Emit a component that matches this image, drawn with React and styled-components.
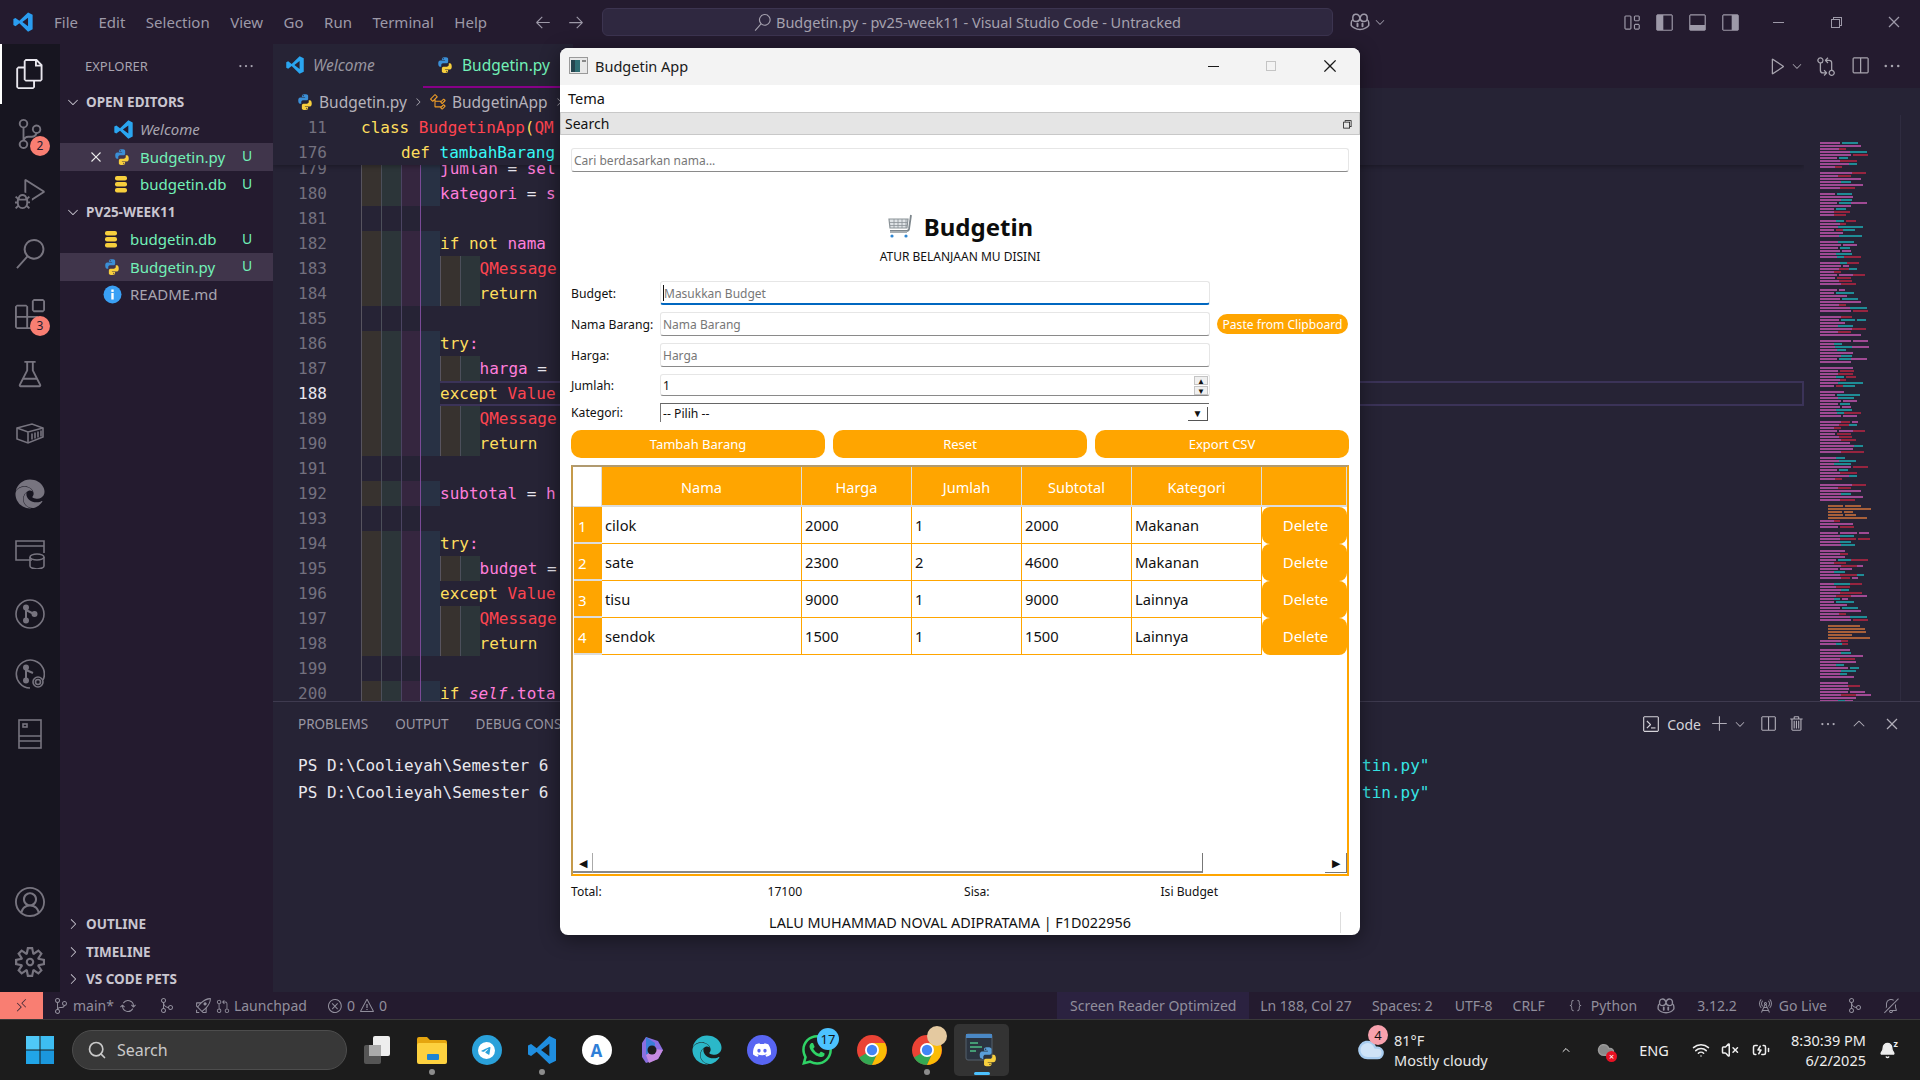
import styled, { createGlobalStyle } from "styled-components";
import {
  VscFiles, VscSourceControl, VscDebugAlt, VscSearch, VscExtensions, VscBeaker, VscAccount,
  VscSettingsGear, VscChevronDown, VscChevronRight, VscEllipsis, VscClose, VscPlay,
  VscChromeMinimize, VscChromeRestore, VscChromeClose, VscChromeMaximize, VscArrowLeft, VscArrowRight,
  VscLayout, VscLayoutSidebarLeft, VscLayoutPanel, VscLayoutSidebarRight, VscSplitHorizontal,
  VscGitCompare, VscAdd, VscTrash, VscTerminal, VscChevronUp, VscRadioTower, VscBellSlash,
  VscError, VscWarning, VscSync, VscGitMerge, VscGitPullRequest, VscRocket, VscSymbolClass,
  VscJson, VscRemote,
} from "react-icons/vsc";
import { SiTelegram, SiDiscord, SiWhatsapp } from "react-icons/si";
import { FaEdge } from "react-icons/fa";
import { Search, Wifi, VolumeX, BatteryCharging, ChevronUp, Bell, Cloud } from "lucide-react";

const UI = `"Noto Sans", "Open Sans", sans-serif`;
const MONO = `"DejaVu Sans Mono", "Liberation Mono", monospace`;
const ORANGE = "#ffa500";

const Global = createGlobalStyle`
  html, body { margin: 0; padding: 0; background: #241b2f; }
  * { box-sizing: border-box; }
`;

const Screen = styled.div`
  position: relative;
  width: 1920px;
  height: 1080px;
  overflow: hidden;
  display: flex;
  flex-direction: column;
  font-family: ${UI};
  background: #241b2f;
`;

/* ---------- vs code title bar ---------- */
const TitleBar = styled.div`
  height: 44px;
  display: flex;
  align-items: center;
  padding-left: 12px;
  background: #241b2f;
  color: #9d99a8;
  font-size: 15px;
`;
const Menu = styled.div`
  display: flex;
  gap: 20.5px;
  margin-left: 20px;
  width: 476px;
`;
const Nav = styled.div`
  display: flex;
  gap: 15px;
  width: 68px;
  font-size: 18px;
  margin-left: 4px;
`;
const CommandCenter = styled.div`
  width: 731px;
  height: 28px;
  background: #2f2840;
  border: 1px solid #3c3450;
  border-radius: 6px;
  display: flex;
  align-items: center;
  justify-content: center;
  gap: 5px;
  font-size: 14.5px;
  color: #a5a1ae;
`;
const TitleTools = styled.div`
  display: flex;
  align-items: center;
  gap: 3px;
  margin-left: 17px;
  font-size: 20px;
`;
const LayoutIcons = styled.div`
  display: flex;
  gap: 14px;
  margin-left: 235px;
  font-size: 19px;
`;
const WinControls = styled.div`
  display: flex;
  gap: 42px;
  margin-left: 30px;
  font-size: 16px;
`;

/* ---------- main area ---------- */
const Main = styled.div`
  flex: 1;
  display: flex;
  min-height: 0;
`;
const ActivityBar = styled.div`
  width: 60px;
  flex: none;
  background: #171520;
  display: flex;
  flex-direction: column;
`;
const ActivityItem = styled.div`
  position: relative;
  height: 60px;
  flex: none;
  display: flex;
  align-items: center;
  justify-content: center;
  color: #77747f;
  font-size: 30px;
  border-left: 2px solid ${(p) => (p.$active ? "#fff" : "transparent")};
  padding-right: 2px;
  ${(p) => p.$active && "color:#e9e7ee;"}
  ${(p) => p.$push && "margin-top:auto;"}
`;
const Badge = styled.span`
  position: absolute;
  left: 28px;
  top: 32px;
  width: 20px;
  height: 20px;
  border-radius: 50%;
  background: #f97e72;
  color: #241b2f;
  font-size: 12px;
  line-height: 20px;
  text-align: center;
`;
const Sidebar = styled.div`
  width: 213px;
  flex: none;
  background: #241b2f;
  display: flex;
  flex-direction: column;
`;
const SideHeader = styled.div`
  height: 44px;
  flex: none;
  display: flex;
  align-items: center;
  justify-content: space-between;
  padding: 0 18px 0 25px;
  color: #a8a4b0;
  font-size: 13px;
`;
const SectionRow = styled.div`
  height: 27.5px;
  flex: none;
  display: flex;
  align-items: center;
  gap: 5px;
  padding-left: 5px;
  color: #c9c6d0;
  font-size: 13.5px;
  font-weight: 700;
  ${(p) => p.$low && "padding-top:2px;"}
  ${(p) => p.$push && "margin-top:auto;"}
`;
const FileRow = styled.div`
  height: 27.5px;
  flex: none;
  display: flex;
  align-items: center;
  padding-left: ${(p) => p.$indent}px;
  background: ${(p) => (p.$selected ? "#40354b" : "transparent")};
  color: ${(p) => p.$color || "#72f1b8"};
  font-size: 15px;
  font-style: ${(p) => (p.$italic ? "italic" : "normal")};
  white-space: nowrap;
  position: relative;
`;
const FileIcon = styled.span`
  width: 27px;
  flex: none;
  display: flex;
  align-items: center;
`;
const CloseMark = styled.span`
  width: 26px;
  flex: none;
  color: #eee;
  font-size: 18px;
  display: flex;
  align-items: center;
`;
const GitMark = styled.span`
  position: absolute;
  left: 182px;
  top: 3px;
  font-size: 14px;
  color: #72f1b8;
`;
const Content = styled.div`
  flex: 1;
  min-width: 0;
  display: flex;
  flex-direction: column;
  background: #262335;
`;
const Tabs = styled.div`
  height: 44px;
  flex: none;
  display: flex;
  align-items: stretch;
  background: #241b2f;
`;
const Tab = styled.div`
  width: 150px;
  display: flex;
  align-items: center;
  gap: 8px;
  padding-left: ${(p) => (p.$active ? 13 : 12)}px;
  background: #262335;
  color: ${(p) => (p.$active ? "#72f1b8" : "#98959f")};
  font-size: 15.5px;
  font-style: ${(p) => (p.$active ? "normal" : "italic")};
  border-bottom: 2px solid ${(p) => (p.$active ? "#880088" : "transparent")};
  white-space: nowrap;
`;
const EditorActions = styled.div`
  margin-left: auto;
  display: flex;
  align-items: center;
  padding-right: 18px;
  color: #a7a4ae;
  font-size: 20px;
`;
const ToolSlot = styled.span`
  margin-left: ${(p) => p.$ml || 0}px;
  display: flex;
  align-items: center;
`;
const Crumbs = styled.div`
  height: 27px;
  flex: none;
  display: flex;
  align-items: center;
  gap: 5px;
  padding-left: 23px;
  color: #b5b2bb;
  font-size: 15.5px;
`;
const EditorBody = styled.div`
  flex: 1;
  min-height: 0;
  display: flex;
`;
const CodeColumn = styled.div`
  width: 1531px;
  flex: none;
  overflow: hidden;
  display: flex;
  flex-direction: column;
`;
const Sticky = styled.div`
  flex: none;
  background: #262335;
  box-shadow: 0 2px 4px rgba(0, 0, 0, 0.25);
  position: relative;
  z-index: 1;
`;
const Lines = styled.div`
  flex: 1;
  min-height: 0;
  overflow: hidden;
`;
const CodeRow = styled.div`
  height: 25px;
  display: flex;
  font-family: ${MONO};
  font-size: 16px;
  line-height: 25px;
  white-space: pre;
  ${(p) => p.$first && "margin-top:-9.5px;"}
`;
const LineNo = styled.span`
  width: 54px;
  flex: none;
  text-align: right;
  color: ${(p) => (p.$current ? "#e8e6ee" : "#74717f")};
`;
const LineBody = styled.div`
  flex: 1;
  margin-left: 34px;
  display: flex;
  padding-left: ${(p) => p.$indent || 0}px;
  ${(p) => p.$current && "box-shadow: inset 0 0 0 2px #3b3358;"}
`;
const Band = styled.span`
  width: 19.75px;
  flex: none;
  background: ${(p) => (p.$on ? p.$color : "transparent")};
  border-left: 1px solid ${(p) => p.$guide};
`;
const Tok = styled.span`
  color: ${(p) => p.$c};
  font-style: ${(p) => (p.$i ? "italic" : "normal")};
`;
const Minimap = styled.svg`
  width: 96px;
  height: 613px;
  flex: none;
  display: block;
`;
const ScrollGutter = styled.div`
  flex: 1;
  border-left: 1px solid #2f2c40;
`;
const Panel = styled.div`
  height: 291px;
  flex: none;
  border-top: 1px solid #3e3a4f;
  position: relative;
  z-index: 2;
  background: #262335;
`;
const PanelHead = styled.div`
  height: 44px;
  display: flex;
  align-items: center;
  padding-left: 25px;
  margin-bottom: 6px;
  color: #9a97a3;
  font-size: 13.5px;
`;
const PanelTab = styled.span`
  margin-right: 27px;
  white-space: nowrap;
`;
const PanelTools = styled.div`
  margin-left: auto;
  display: flex;
  align-items: center;
  padding-right: 20px;
  color: #b0adb8;
  font-size: 18px;
`;
const CodeLabel = styled.span`
  display: flex;
  align-items: center;
  gap: 7px;
  font-size: 14px;
  color: #d5d3da;
`;
const TermRow = styled.div`
  display: grid;
  grid-template-columns: 1064px auto;
  height: 27px;
  padding-left: 25px;
  font-family: ${MONO};
  font-size: 16px;
  line-height: 27px;
  white-space: pre;
  color: #e9e8ee;
`;
const TermLink = styled.span`
  color: #36e6e6;
`;

/* ---------- status bar ---------- */
const StatusBar = styled.div`
  height: 28px;
  flex: none;
  display: flex;
  align-items: center;
  background: #241b2f;
  color: #918e9c;
  font-size: 14px;
  border-bottom: 1px solid #3a3a3a;
  position: relative;
  z-index: 2;
`;
const Remote = styled.div`
  width: 43px;
  height: 100%;
  background: #f97e72;
  color: #402a38;
  display: flex;
  align-items: center;
  justify-content: center;
  font-size: 15px;
`;
const StatusItem = styled.span`
  margin-left: ${(p) => p.$ml || 0}px;
  display: flex;
  align-items: center;
  gap: ${(p) => p.$gap || 4}px;
  white-space: nowrap;
  font-size: 14px;
`;
const StatusRight = styled.div`
  margin-left: auto;
  height: 100%;
  display: flex;
  align-items: center;
  padding-right: 21px;
`;
const ReaderMode = styled.span`
  height: 100%;
  width: 192px;
  display: flex;
  align-items: center;
  justify-content: center;
  background: #2b2240;
  white-space: nowrap;
`;

/* ---------- windows task bar ---------- */
const Taskbar = styled.div`
  height: 60px;
  flex: none;
  display: flex;
  align-items: center;
  background: #1c1c1c;
  color: #eee;
`;
const StartButton = styled.div`
  width: 72px;
  flex: none;
  display: flex;
  justify-content: center;
  padding-left: 12px;
  padding-right: 4px;
`;
const SearchPill = styled.div`
  width: 275px;
  height: 40px;
  flex: none;
  border-radius: 20px;
  background: #383838;
  border: 1px solid #4d4d4d;
  display: flex;
  align-items: center;
  gap: 10px;
  padding-left: 14px;
  color: #c9c9c9;
  font-size: 16px;
`;
const Apps = styled.div`
  display: flex;
  margin-left: 2px;
`;
const AppSlot = styled.div`
  position: relative;
  width: 55px;
  height: 52px;
  display: flex;
  align-items: center;
  justify-content: center;
  border-radius: 5px;
  ${(p) => p.$active && "background:#333;"}
`;
const RunDot = styled.span`
  position: absolute;
  bottom: 1px;
  left: 50%;
  transform: translateX(-50%);
  width: ${(p) => (p.$active ? 16 : 6)}px;
  height: ${(p) => (p.$active ? 3 : 6)}px;
  border-radius: 3px;
  background: ${(p) => (p.$active ? "#4cc2ff" : "#8c8c8c")};
`;
const CountBadge = styled.span`
  position: absolute;
  top: 4px;
  left: 28px;
  width: 22px;
  height: 22px;
  border-radius: 50%;
  background: #4cc2ff;
  color: #111;
  font-size: 13px;
  line-height: 22px;
  text-align: center;
`;
const Tray = styled.div`
  margin-left: auto;
  padding-right: 23px;
  display: flex;
  align-items: center;
`;
const TrayIcon = styled.span`
  position: relative;
  margin-left: ${(p) => p.$ml || 0}px;
  width: ${(p) => p.$w}px;
  flex: none;
  display: flex;
  justify-content: center;
  align-items: center;
  font-size: 14.5px;
`;
const Weather = styled.div`
  margin-left: 8px;
  width: 166px;
  font-size: 14.5px;
  line-height: 20px;
  color: #e6e6e6;
`;
const Clock = styled.div`
  width: 96px;
  flex: none;
  text-align: right;
  font-size: 14.5px;
  line-height: 20px;
`;
const WeatherBadge = styled.span`
  position: absolute;
  top: -11px;
  left: 12px;
  width: 20px;
  height: 20px;
  border-radius: 50%;
  background: #f7a1ad;
  color: #111;
  font-size: 13px;
  line-height: 20px;
  text-align: center;
`;
const ErrorDot = styled.span`
  position: absolute;
  right: -1px;
  bottom: -3px;
  width: 11px;
  height: 11px;
  border-radius: 50%;
  background: #e81123;
  color: #fff;
  font-size: 9px;
  line-height: 11px;
  text-align: center;
`;
const SleepMark = styled.span`
  position: absolute;
  top: -5px;
  right: -1px;
  font-size: 9px;
  font-weight: 700;
`;

/* ---------- floating budgetin window ---------- */
const AppWindow = styled.div`
  position: absolute;
  left: 560px;
  top: 48px;
  width: 800px;
  height: 887px;
  z-index: 5;
  background: #fff;
  border-radius: 8px;
  overflow: hidden;
  display: flex;
  flex-direction: column;
  box-shadow: 0 4px 20px rgba(0, 0, 0, 0.45);
  color: #111;
`;
const WinTitle = styled.div`
  height: 37px;
  flex: none;
  background: #f3f3f3;
  display: flex;
  align-items: center;
  padding: 0 0 2px 9px;
  gap: 7px;
  font-size: 14.5px;
  color: #1a1a1a;
`;
const WinButtons = styled.div`
  margin-left: auto;
  display: flex;
  align-items: center;
  gap: 42px;
  padding-right: 21px;
  font-size: 16px;
`;
const MenuBar = styled.div`
  height: 27px;
  flex: none;
  padding-left: 8px;
  font-size: 14.5px;
  line-height: 27px;
`;
const DockTitle = styled.div`
  height: 23px;
  flex: none;
  background: #e5e5e5;
  border: 1px solid #c8c8c8;
  display: flex;
  align-items: center;
  justify-content: space-between;
  padding: 0 6px 0 4px;
  font-size: 14px;
`;
const Body = styled.div`
  flex: 1;
  display: flex;
  flex-direction: column;
  padding: 13px 11px 0 11px;
  min-height: 0;
`;
const TextBox = styled.div`
  height: ${(p) => p.$h || 24}px;
  background: #fff;
  border: 1px solid #e6e6e6;
  border-bottom: ${(p) => (p.$focus ? "2px solid #0067c0" : "1px solid #8a8a8a")};
  border-radius: 3px;
  display: flex;
  align-items: center;
  padding-left: 2px;
  ${(p) => p.$focus && "padding-top:1px;"}
  font-size: 12px;
  color: ${(p) => (p.$value ? "#111" : "#777")};
  position: relative;
`;
const Caret = styled.span`
  width: 1px;
  height: 16px;
  background: #111;
`;
const Brand = styled.div`
  margin-top: 40px;
  height: 28px;
  display: flex;
  align-items: center;
  justify-content: center;
  gap: 11px;
  font-size: 24px;
  font-weight: 700;
  color: #0c0c0c;
`;
const Tagline = styled.div`
  margin-top: 8px;
  height: 18px;
  text-align: center;
  font-size: 12px;
  line-height: 18px;
`;
const Form = styled.div`
  margin-top: 15px;
  display: grid;
  grid-template-columns: 89px 550px 138px;
  row-gap: 7px;
  align-items: center;
  font-size: 12.2px;
`;
const PasteButton = styled.div`
  justify-self: end;
  width: 131px;
  height: 20px;
  border-radius: 10px;
  background: ${ORANGE};
  color: #fff;
  font-size: 12.1px;
  line-height: 21px;
  text-align: center;
  white-space: nowrap;
`;
const SpinButtons = styled.div`
  position: absolute;
  right: 1px;
  top: 1px;
  width: 14px;
  display: flex;
  flex-direction: column;
  gap: 1px;
`;
const SpinPart = styled.div`
  height: 9px;
  background: #f0f0f0;
  border: 1px solid #c4c4c4;
  display: flex;
  align-items: center;
  justify-content: center;
  font-size: 8px;
  line-height: 1;
  color: #111;
`;
const SelectBox = styled.div`
  height: 19px;
  width: 549px;
  border-top: 1px solid #666;
  border-left: 1px solid #777;
  display: flex;
  align-items: center;
  justify-content: space-between;
  padding: 1px 1px 0 2px;
  font-size: 12.2px;
`;
const SelectArrow = styled.div`
  width: 20px;
  height: 14px;
  border-right: 1px solid #555;
  border-bottom: 1px solid #555;
  display: flex;
  align-items: center;
  justify-content: center;
  font-size: 10px;
`;
const Actions = styled.div`
  margin-top: 8px;
  display: grid;
  grid-template-columns: 254px 254px 254px;
  justify-content: space-between;
`;
const ActionButton = styled.div`
  height: 28px;
  border-radius: 10px;
  background: ${ORANGE};
  color: #fff;
  font-size: 13px;
  line-height: 28px;
  text-align: center;
`;
const TableFrame = styled.div`
  margin-top: 7px;
  height: 411px;
  flex: none;
  border: 2px solid ${ORANGE};
  border-top-color: #b09a70;
  border-left-color: #c59a4a;
  display: flex;
  flex-direction: column;
`;
const Grid = styled.div`
  display: grid;
  grid-template-columns: 29px 200px 110px 110px 110px 130px 85px;
`;
const CornerCell = styled.div`
  height: 40px;
  background: #fff;
  border-right: 1px solid #ddd;
  border-bottom: 1px solid #ddd;
`;
const HeadCell = styled.div`
  height: 40px;
  background: ${ORANGE};
  color: #fff;
  font-size: 14.5px;
  line-height: 41px;
  text-align: center;
  border-right: 1px solid #dcdcdc;
  border-bottom: 2px solid #dcdcdc;
`;
const RowHead = styled.div`
  height: 37px;
  background: ${ORANGE};
  color: #fff;
  font-size: 15px;
  line-height: 38px;
  padding-left: 4px;
  margin-left: 1px;
  border-bottom: 2px solid #dcdcdc;
`;
const Cell = styled.div`
  height: 37px;
  border-right: 1px solid ${ORANGE};
  border-bottom: 1px solid ${ORANGE};
  font-size: 14.7px;
  line-height: 36px;
  padding-left: 3px;
`;
const DeleteCell = styled.div`
  height: 37px;
  background: ${ORANGE};
  border-radius: 8px;
  color: #fff;
  font-size: 15px;
  line-height: 36px;
  text-align: center;
  padding-left: 2px;
`;
const Scrollbar = styled.div`
  margin-top: auto;
  margin-bottom: 1px;
  height: 20px;
  flex: none;
  display: flex;
  background: #fff;
`;
const ScrollArrow = styled.div`
  width: 20px;
  flex: none;
  display: flex;
  align-items: center;
  justify-content: center;
  font-size: 11px;
  color: #111;
  ${(p) => p.$end && "margin-left:auto;width:22px;border-right:1px solid #777;border-bottom:1px solid #777;"}
  ${(p) => !p.$end && "border-right:1px solid #aaa;border-bottom:2px solid #888;"}
`;
const ScrollThumb = styled.div`
  width: 610px;
  flex: none;
  border-right: 1px solid #777;
  border-bottom: 2px solid #888;
`;
const Totals = styled.div`
  margin-top: 6px;
  height: 20px;
  flex: none;
  display: grid;
  grid-template-columns: repeat(4, 196.5px);
  font-size: 12.1px;
  line-height: 20px;
`;
const Author = styled.div`
  margin-top: 10px;
  height: 22px;
  flex: none;
  position: relative;
  font-size: 14.4px;
  line-height: 22px;
  text-align: center;
  padding-right: 20px;
  white-space: nowrap;
`;
const SizeGrip = styled.span`
  position: absolute;
  right: 8px;
  top: 0;
  width: 1px;
  height: 21px;
  background: #ddd;
`;

/* ---------- drawings ---------- */
const PY = "M11.900 1.500C7.600 1.500 7.900 3.400 7.900 3.400v2h4.200V6H5.900S3 5.700 3 10.100s2.500 4.300 2.500 4.300H7v-2.100s-.1-2.500 2.500-2.500h4.300s2.400 0 2.400-2.300V3.800s.4-2.300-4.300-2.300zM9.600 2.800a.8.8 0 1 1 0 1.600.8.8 0 0 1 0-1.600z";
const Python = ({ s = 18 }) => (
  <svg width={s} height={s} viewBox="0 0 24 24">
    <path fill="#3b8fd6" d={PY} />
    <path fill="#f7cf3d" transform="rotate(180 12 12)" d={PY} />
  </svg>
);
const PythonWindow = () => (
  <svg width="34" height="36" viewBox="0 0 34 36">
    <rect x="1" y="2" width="26" height="26" rx="2" fill="#2b3440" stroke="#55606c" />
    <rect x="1" y="2" width="26" height="4" fill="#4a88c5" />
    <path d="M5 11h8M5 15h12M5 19h6" stroke="#4fbf86" strokeWidth="1.500" />
    <g transform="translate(12 14) scale(.9)">
      <path fill="#5a9fd8" d={PY} />
      <path fill="#f7cf3d" transform="rotate(180 12 12)" d={PY} />
    </g>
  </svg>
);
const CodeLogo = ({ s = 20, c = "#2aa5f0" }) => (
  <svg width={s} height={s} viewBox="0 0 24 24">
    <path fill={c} fillRule="evenodd" d="M17.500 1.500 22.500 4v16l-5 2.500L8 13.300l-4.200 3.200-2.300-1.200v-6.600l2.300-1.200L8 10.700zM17.500 7.300 11.300 12l6.200 4.700z" />
  </svg>
);
const CopilotFace = ({ s = 20 }) => (
  <svg width={s} height={s} viewBox="0 0 24 24" fill="none" stroke="currentColor" strokeWidth="1.800">
    <path d="M12 7.500C11 3 8.500 2.500 6.500 2.800 4 3.200 3 5.500 3.500 9c.1 1 1.500 2.500 4 2.500S11.500 10 12 7.500zM12 7.500C13 3 15.500 2.500 17.500 2.800 20 3.200 21 5.500 20.500 9c-.1 1-1.500 2.500-4 2.500S12.500 10 12 7.500z" />
    <path d="M3.500 9C2 10 1.500 11.500 1.500 13v3c1 1.500 5 5 10.500 5s9.500-3.500 10.500-5v-3c0-1.500-.5-3-2-4" />
    <path d="M9 14v3M15 14v3" strokeWidth="2.400" strokeLinecap="round" />
  </svg>
);
const DbIcon = () => (
  <svg width="16" height="18" viewBox="0 0 16 18">
    <rect x="2" y="1" width="12" height="4.500" rx="2" fill="#f7cf3d" />
    <rect x="2" y="7" width="12" height="4.500" rx="2" fill="#f7cf3d" />
    <rect x="2" y="13" width="12" height="4.500" rx="2" fill="#f7cf3d" />
  </svg>
);
const InfoIcon = () => (
  <svg width="19" height="19" viewBox="0 0 19 19">
    <circle cx="9.500" cy="9.500" r="9" fill="#3aa0f5" />
    <rect x="8.300" y="8" width="2.400" height="6.500" fill="#fff" />
    <rect x="8.300" y="4.500" width="2.400" height="2.400" fill="#fff" />
  </svg>
);
const ContainerIcon = () => (
  <svg width="30" height="30" viewBox="0 0 30 30" fill="none" stroke="currentColor" strokeWidth="1.600">
    <path d="M2 9l15-4 11 4v9l-15 6-11-4z" />
    <path d="M2 9l11 4 15-4M13 13v11M17 14.500v6M20 13.500v6M23 12.500v6M26 11.500v6" />
  </svg>
);
const DbWindowIcon = () => (
  <svg width="30" height="30" viewBox="0 0 30 30" fill="none" stroke="currentColor" strokeWidth="1.600">
    <path d="M17 21H1V2h28v12M1 7h28" />
    <ellipse cx="22" cy="18" rx="7" ry="3" />
    <path d="M15 18v9c0 1.600 3 3 7 3s7-1.400 7-3v-9" />
  </svg>
);
const BranchCircleIcon = () => (
  <svg width="30" height="30" viewBox="0 0 30 30" fill="none" stroke="currentColor" strokeWidth="1.600">
    <circle cx="15" cy="15" r="14" />
    <path d="M11 9v12M11 11l8 4" strokeWidth="2" />
    <circle cx="11" cy="8.500" r="2.200" fill="currentColor" />
    <circle cx="11" cy="21.500" r="2.200" fill="currentColor" />
    <circle cx="19.500" cy="15" r="2.200" fill="currentColor" />
  </svg>
);
const BranchSearchIcon = () => (
  <svg width="30" height="30" viewBox="0 0 30 30" fill="none" stroke="currentColor" strokeWidth="1.600">
    <path d="M28 21A14 14 0 1 0 15 29" />
    <path d="M11 9v12M11 11l7 3" strokeWidth="2" />
    <circle cx="11" cy="8.500" r="2.200" fill="currentColor" />
    <circle cx="11" cy="21.500" r="2.200" fill="currentColor" />
    <circle cx="23" cy="23" r="5" fill="#171520" />
    <circle cx="23" cy="23" r="2.500" />
  </svg>
);
const CabinetIcon = () => (
  <svg width="26" height="30" viewBox="0 0 26 30" fill="none" stroke="currentColor" strokeWidth="1.600">
    <rect x="2" y="1" width="22" height="28" />
    <path d="M2 17h22M2 22h22" />
    <rect x="6" y="5" width="4" height="3" />
  </svg>
);
const Cart = () => (
  <svg width="26" height="24" viewBox="0 0 26 24" fill="none">
    <path d="M2 5h19l-1 9H3z" fill="#dfe3e6" stroke="#8b9398" strokeWidth="1.200" />
    <path d="M2 8.500h19M3 11.500h17M7 5v9M11 5v9M15 5v9M19 5v9" stroke="#8b9398" strokeWidth=".8" />
    <path d="M24 1l-2 14c-.2 1-1 2-2.500 2H3" stroke="#7d868c" strokeWidth="1.800" />
    <path d="M3 18h17" stroke="#a8aeb2" strokeWidth="2" />
    <circle cx="5" cy="22" r="1.600" fill="#2f86d1" />
    <circle cx="19" cy="22" r="1.600" fill="#2f86d1" />
  </svg>
);
const AppGlyph = () => (
  <svg width="19" height="17" viewBox="0 0 19 17">
    <rect x=".5" y=".5" width="18" height="16" fill="#e8e8e8" stroke="#9a9a9a" />
    <rect x="2" y="3" width="9" height="12" fill="#2f6d73" />
    <rect x="2" y="3" width="4" height="12" fill="#25454f" />
    <rect x="13" y="3" width="4" height="2" fill="#888" />
  </svg>
);
const WinLogo = () => (
  <svg width="30" height="30" viewBox="0 0 30 30">
    <rect x="1" y="1" width="13.500" height="13.500" fill="#4fc8f7" />
    <rect x="15.500" y="1" width="13.500" height="13.500" fill="#3dbdf2" />
    <rect x="1" y="15.500" width="13.500" height="13.500" fill="#21a5e8" />
    <rect x="15.500" y="15.500" width="13.500" height="13.500" fill="#1b97dd" />
  </svg>
);
const TaskView = () => (
  <svg width="32" height="30" viewBox="0 0 32 30">
    <rect x="3" y="10" width="17" height="19" rx="2" fill="#555" />
    <rect x="12" y="1" width="17" height="20" rx="2" fill="#eee" />
    <rect x="8" y="10" width="12" height="11" fill="#aaa" />
  </svg>
);
const Folder = () => (
  <svg width="32" height="30" viewBox="0 0 32 30">
    <path d="M1 4a2 2 0 0 1 2-2h8l3 3h15a2 2 0 0 1 2 2v3H1z" fill="#e5a50f" />
    <rect x="1" y="8" width="30" height="21" rx="2" fill="#fdd13f" />
    <rect x="11" y="19" width="12" height="6" rx="1" fill="#1d83d4" />
  </svg>
);
const RoundApp = styled.span`
  width: 30px;
  height: 30px;
  border-radius: 50%;
  background: ${(p) => p.$bg};
  color: ${(p) => p.$fg || "#fff"};
  display: flex;
  align-items: center;
  justify-content: center;
  font-size: ${(p) => p.$size || 17}px;
  font-weight: 700;
`;
const Copilot = () => (
  <svg width="30" height="30" viewBox="0 0 30 30">
    <path d="M9 2l12 4 5 9-5 9-12 4-4-6V8z" fill="#8a6fe0" />
    <path d="M9 2l9 6v6L9 20z" fill="#3b7fd8" />
    <path d="M21 24l-9 4-3-8 9-6 8 1z" fill="#c58ae0" />
    <circle cx="15" cy="15" r="4.500" fill="#1c1c1c" />
  </svg>
);
const Chrome = () => (
  <svg width="32" height="32" viewBox="0 0 32 32">
    <circle cx="16" cy="16" r="15" fill="#ea4335" />
    <path d="M16 16 3 23.500A15 15 0 0 0 16 31l7-15z" fill="#34a853" />
    <path d="M16 9h13a15 15 0 0 1-13 22l7-15z" fill="#fbbc05" />
    <circle cx="16" cy="16" r="7" fill="#fff" />
    <circle cx="16" cy="16" r="5.200" fill="#4285f4" />
  </svg>
);
const Avatar = styled.span`
  position: absolute;
  top: 2px;
  left: 28px;
  width: 20px;
  height: 20px;
  border-radius: 50%;
  background: #e4c9a0;
`;

// synthwave palette used by the code
const KW = "#fede5d";
const VAR = "#ff7edb";
const CLS = "#fe4450";
const FN = "#36f9f6";
const OP = "#e8e6ee";
const bandColors = ["#37322f", "#2c3539", "#35263f", "#283144", "#37322f", "#2c3539"];
const guideColors = ["#57545f", "#4c4f5a", "#4b4462", "#7a4a96", "#57545f", "#4c4f5a"];

const code = [
  { n: 179, d: 4, t: [["jumlah", VAR], [" = ", OP], ["sel", VAR]] },
  { n: 180, d: 4, t: [["kategori", VAR], [" = ", OP], ["s", VAR]] },
  { n: 181, d: 4 },
  { n: 182, d: 4, t: [["if not ", KW], ["nama", VAR]] },
  { n: 183, d: 6, t: [["QMessage", CLS]] },
  { n: 184, d: 6, t: [["return", KW]] },
  { n: 185, d: 4 },
  { n: 186, d: 4, t: [["try", KW], [":", VAR]] },
  { n: 187, d: 6, t: [["harga", VAR], [" = ", OP]] },
  { n: 188, d: 4, t: [["except ", KW], ["Value", CLS]], current: true },
  { n: 189, d: 6, t: [["QMessage", CLS]] },
  { n: 190, d: 6, t: [["return", KW]] },
  { n: 191, d: 4 },
  { n: 192, d: 4, t: [["subtotal", VAR], [" = ", OP], ["h", VAR]] },
  { n: 193, d: 4 },
  { n: 194, d: 4, t: [["try", KW], [":", VAR]] },
  { n: 195, d: 6, t: [["budget", VAR], [" =", OP]] },
  { n: 196, d: 4, t: [["except ", KW], ["Value", CLS]] },
  { n: 197, d: 6, t: [["QMessage", CLS]] },
  { n: 198, d: 6, t: [["return", KW]] },
  { n: 199, d: 4 },
  { n: 200, d: 4, t: [["if ", KW], ["self", VAR, true], [".tota", VAR]] },
];

const rows = [
  ["cilok", "2000", "1", "2000", "Makanan"],
  ["sate", "2300", "2", "4600", "Makanan"],
  ["tisu", "9000", "1", "9000", "Lainnya"],
  ["sendok", "1500", "1", "1500", "Lainnya"],
];

// fake the minimap lines, seeded so it is the same each time
const miniBars = (() => {
  const out = [];
  let seed = 17;
  const rnd = () => {
    seed = (seed * 73 + 41) % 1009;
    return seed / 1009;
  };
  const palette = ["#a04a94", "#1f8c96", "#97243f", "#a8603a"];
  let gapLeft = 9;
  for (let y = 0; y < 585; y += 3) {
    gapLeft--;
    if (gapLeft < 0) {
      gapLeft = 5 + Math.floor(rnd() * 9);
      continue;
    }
    const orange = y > 320 && y % 120 < 18;
    let x = 20 + (orange ? 8 : 0);
    const parts = 2 + Math.floor(rnd() * 2);
    for (let i = 0; i < parts; i++) {
      const w = i === 0 ? 14 + Math.floor(rnd() * 8) : 6 + Math.floor(rnd() * 12);
      const color = orange ? palette[3] : i === 0 ? palette[0] : palette[Math.floor(rnd() * 3)];
      out.push({ x, y, w, color });
      x += w + (rnd() > 0.8 ? 2 : 0);
    }
  }
  return out;
})();

const CodeLine = ({ line, first }) => {
  const bands = [0, 1, 2, 3, 4, 5].slice(0, line.d);
  return (
    <CodeRow $first={first}>
      <LineNo $current={line.current}>{line.n}</LineNo>
      <LineBody $current={line.current}>
        {bands.map((b) => (
          <Band key={b} $on={!!line.t} $color={bandColors[b]} $guide={guideColors[b]} />
        ))}
        {line.t && line.t.map(([s, c, i], k) => (
          <Tok key={k} $c={c} $i={i}>{s}</Tok>
        ))}
      </LineBody>
    </CodeRow>
  );
};

export default function App() {
  return (
    <Screen>
      <Global />
      <TitleBar>
        <CodeLogo s={22} c="#2a9df0" />
        <Menu>
          {["File", "Edit", "Selection", "View", "Go", "Run", "Terminal", "Help"].map((m) => (
            <span key={m}>{m}</span>
          ))}
        </Menu>
        <Nav><VscArrowLeft /><VscArrowRight /></Nav>
        <CommandCenter>
          <VscSearch size={17} />
          Budgetin.py - pv25-week11 - Visual Studio Code - Untracked
        </CommandCenter>
        <TitleTools><CopilotFace s={20} /><VscChevronDown size={14} /></TitleTools>
        <LayoutIcons>
          <VscLayout /><VscLayoutSidebarLeft /><VscLayoutPanel /><VscLayoutSidebarRight />
        </LayoutIcons>
        <WinControls>
          <VscChromeMinimize /><VscChromeRestore /><VscChromeClose />
        </WinControls>
      </TitleBar>

      <Main>
        <ActivityBar>
          <ActivityItem $active><VscFiles /></ActivityItem>
          <ActivityItem><VscSourceControl /><Badge>2</Badge></ActivityItem>
          <ActivityItem><VscDebugAlt /></ActivityItem>
          <ActivityItem><VscSearch /></ActivityItem>
          <ActivityItem><VscExtensions /><Badge>3</Badge></ActivityItem>
          <ActivityItem><VscBeaker /></ActivityItem>
          <ActivityItem><ContainerIcon /></ActivityItem>
          <ActivityItem><FaEdge /></ActivityItem>
          <ActivityItem><DbWindowIcon /></ActivityItem>
          <ActivityItem><BranchCircleIcon /></ActivityItem>
          <ActivityItem><BranchSearchIcon /></ActivityItem>
          <ActivityItem><CabinetIcon /></ActivityItem>
          <ActivityItem $push><VscAccount /></ActivityItem>
          <ActivityItem><VscSettingsGear /></ActivityItem>
        </ActivityBar>

        <Sidebar>
          <SideHeader>EXPLORER<VscEllipsis size={18} /></SideHeader>
          <SectionRow><VscChevronDown size={16} />OPEN EDITORS</SectionRow>
          <FileRow $indent={53} $color="#a8a5b0" $italic><FileIcon><CodeLogo s={21} /></FileIcon>Welcome</FileRow>
          <FileRow $indent={27} $selected>
            <CloseMark><VscClose /></CloseMark>
            <FileIcon><Python /></FileIcon>Budgetin.py<GitMark>U</GitMark>
          </FileRow>
          <FileRow $indent={53}><FileIcon><DbIcon /></FileIcon>budgetin.db<GitMark>U</GitMark></FileRow>
          <SectionRow><VscChevronDown size={16} />PV25-WEEK11</SectionRow>
          <FileRow $indent={43}><FileIcon><DbIcon /></FileIcon>budgetin.db<GitMark>U</GitMark></FileRow>
          <FileRow $indent={43} $selected><FileIcon><Python /></FileIcon>Budgetin.py<GitMark>U</GitMark></FileRow>
          <FileRow $indent={43} $color="#a8a5b0"><FileIcon><InfoIcon /></FileIcon>README.md</FileRow>
          <SectionRow $push $low><VscChevronRight size={16} />OUTLINE</SectionRow>
          <SectionRow $low><VscChevronRight size={16} />TIMELINE</SectionRow>
          <SectionRow $low><VscChevronRight size={16} />VS CODE PETS</SectionRow>
        </Sidebar>

        <Content>
          <Tabs>
            <Tab><CodeLogo s={20} />Welcome</Tab>
            <Tab $active><Python s={18} />Budgetin.py</Tab>
            <EditorActions>
              <VscPlay />
              <ToolSlot $ml={2}><VscChevronDown size={14} /></ToolSlot>
              <ToolSlot $ml={12}><VscGitCompare /></ToolSlot>
              <ToolSlot $ml={14}><VscSplitHorizontal /></ToolSlot>
              <ToolSlot $ml={12}><VscEllipsis /></ToolSlot>
            </EditorActions>
          </Tabs>
          <Crumbs>
            <Python s={18} />Budgetin.py<VscChevronRight size={12} />
            <VscSymbolClass size={18} color="#ee9d28" />BudgetinApp<VscChevronRight size={12} />
          </Crumbs>
          <EditorBody>
            <CodeColumn>
              <Sticky>
                <CodeRow>
                  <LineNo>11</LineNo>
                  <LineBody>
                    <Tok $c={KW}>class </Tok><Tok $c={CLS}>BudgetinApp</Tok><Tok $c={KW}>(</Tok><Tok $c={CLS}>QM</Tok>
                  </LineBody>
                </CodeRow>
                <CodeRow>
                  <LineNo>176</LineNo>
                  <LineBody $indent={40}>
                    <Tok $c={KW}>def </Tok><Tok $c={FN}>tambahBarang</Tok>
                  </LineBody>
                </CodeRow>
              </Sticky>
              <Lines>
                {code.map((l, i) => <CodeLine key={l.n} line={l} first={i === 0} />)}
              </Lines>
            </CodeColumn>
            <Minimap viewBox="4 0 96 613">
              {miniBars.map((b, i) => (
                <rect key={i} x={b.x} y={27 + b.y} width={b.w} height="2" fill={b.color} />
              ))}
            </Minimap>
            <ScrollGutter />
          </EditorBody>
          <Panel>
            <PanelHead>
              <PanelTab>PROBLEMS</PanelTab>
              <PanelTab>OUTPUT</PanelTab>
              <PanelTab>DEBUG CONSOLE</PanelTab>
              <PanelTools>
                <CodeLabel><VscTerminal size={18} />Code</CodeLabel>
                <ToolSlot $ml={10}><VscAdd /></ToolSlot>
                <ToolSlot $ml={4}><VscChevronDown size={14} /></ToolSlot>
                <ToolSlot $ml={12}><VscSplitHorizontal /></ToolSlot>
                <ToolSlot $ml={11}><VscTrash /></ToolSlot>
                <ToolSlot $ml={13}><VscEllipsis /></ToolSlot>
                <ToolSlot $ml={13}><VscChevronUp /></ToolSlot>
                <ToolSlot $ml={16}><VscChromeClose size={16} /></ToolSlot>
              </PanelTools>
            </PanelHead>
            <TermRow><span>PS D:\Coolieyah\Semester 6</span><TermLink>tin.py"</TermLink></TermRow>
            <TermRow><span>PS D:\Coolieyah\Semester 6</span><TermLink>tin.py"</TermLink></TermRow>
          </Panel>
        </Content>
      </Main>

      <StatusBar>
        <Remote><VscRemote /></Remote>
        <StatusItem $ml={10}><VscSourceControl size={16} />main*</StatusItem>
        <StatusItem $ml={6}><VscSync size={16} /></StatusItem>
        <StatusItem $ml={23}><VscGitMerge size={16} /></StatusItem>
        <StatusItem $ml={20}><VscRocket size={17} /><VscGitPullRequest size={14} />Launchpad</StatusItem>
        <StatusItem $ml={20}><VscError size={16} />0<VscWarning size={16} />0</StatusItem>
        <StatusRight>
          <ReaderMode>Screen Reader Optimized</ReaderMode>
          <StatusItem $ml={11}>Ln 188, Col 27</StatusItem>
          <StatusItem $ml={20}>Spaces: 2</StatusItem>
          <StatusItem $ml={22}>UTF-8</StatusItem>
          <StatusItem $ml={20}>CRLF</StatusItem>
          <StatusItem $ml={23} $gap={8}><VscJson size={15} />Python</StatusItem>
          <StatusItem $ml={20}><CopilotFace s={18} /></StatusItem>
          <StatusItem $ml={22}>3.12.2</StatusItem>
          <StatusItem $ml={20} $gap={6}><VscRadioTower size={16} />Go Live</StatusItem>
          <StatusItem $ml={20}><VscGitMerge size={16} /></StatusItem>
          <StatusItem $ml={20}><VscBellSlash size={16} /></StatusItem>
        </StatusRight>
      </StatusBar>

      <Taskbar>
        <StartButton><WinLogo /></StartButton>
        <SearchPill><Search size={20} />Search</SearchPill>
        <Apps>
          <AppSlot><TaskView /></AppSlot>
          <AppSlot><Folder /><RunDot /></AppSlot>
          <AppSlot><RoundApp $bg="#2aa1da"><SiTelegram /></RoundApp></AppSlot>
          <AppSlot><CodeLogo s={32} c="#1f8ee0" /><RunDot /></AppSlot>
          <AppSlot><RoundApp $bg="#fff" $fg="#2f7fd8">A</RoundApp></AppSlot>
          <AppSlot><Copilot /></AppSlot>
          <AppSlot><FaEdge size={30} color="#2bb8c9" /></AppSlot>
          <AppSlot><RoundApp $bg="#5865f2" $size={18}><SiDiscord /></RoundApp></AppSlot>
          <AppSlot><SiWhatsapp size={30} color="#2fd366" /><CountBadge>17</CountBadge></AppSlot>
          <AppSlot><Chrome /></AppSlot>
          <AppSlot><Chrome /><Avatar /><RunDot /></AppSlot>
          <AppSlot $active><PythonWindow /><RunDot $active /></AppSlot>
        </Apps>
        <Tray>
          <TrayIcon $w={30}><Cloud size={28} color="#a9cdf0" fill="#cfe3f7" /><WeatherBadge>4</WeatherBadge></TrayIcon>
          <Weather>81°F<br />Mostly cloudy</Weather>
          <TrayIcon $w={12}><ChevronUp size={20} /></TrayIcon>
          <TrayIcon $ml={24} $w={20}>
            <Cloud size={18} color="#9a9a9a" fill="#8a8a8a" /><ErrorDot>×</ErrorDot>
          </TrayIcon>
          <TrayIcon $ml={24} $w={28}>ENG</TrayIcon>
          <TrayIcon $ml={24} $w={18}><Wifi size={18} /></TrayIcon>
          <TrayIcon $ml={11} $w={18}><VolumeX size={18} /></TrayIcon>
          <TrayIcon $ml={13} $w={18}><BatteryCharging size={18} /></TrayIcon>
          <Clock>8:30:39 PM<br />6/2/2025</Clock>
          <TrayIcon $ml={12} $w={19}><Bell size={17} fill="#eee" /><SleepMark>z</SleepMark></TrayIcon>
        </Tray>
      </Taskbar>

      <AppWindow>
        <WinTitle>
          <AppGlyph />Budgetin App
          <WinButtons>
            <VscChromeMinimize /><VscChromeMaximize color="#c4c4c4" /><VscChromeClose size={18} />
          </WinButtons>
        </WinTitle>
        <MenuBar>Tema</MenuBar>
        <DockTitle>Search<VscChromeRestore size={12} /></DockTitle>
        <Body>
          <TextBox>Cari berdasarkan nama...</TextBox>
          <Brand><Cart />Budgetin</Brand>
          <Tagline>ATUR BELANJAAN MU DISINI</Tagline>
          <Form>
            <span>Budget:</span>
            <TextBox $focus><Caret />Masukkan Budget</TextBox>
            <span />
            <span>Nama Barang:</span>
            <TextBox>Nama Barang</TextBox>
            <PasteButton>Paste from Clipboard</PasteButton>
            <span>Harga:</span>
            <TextBox>Harga</TextBox>
            <span />
            <span>Jumlah:</span>
            <TextBox $h={22} $value>
              1
              <SpinButtons><SpinPart>▲</SpinPart><SpinPart>▼</SpinPart></SpinButtons>
            </TextBox>
            <span />
            <span>Kategori:</span>
            <SelectBox>-- Pilih --<SelectArrow>▼</SelectArrow></SelectBox>
            <span />
          </Form>
          <Actions>
            <ActionButton>Tambah Barang</ActionButton>
            <ActionButton>Reset</ActionButton>
            <ActionButton>Export CSV</ActionButton>
          </Actions>
          <TableFrame>
            <Grid>
              <CornerCell />
              {["Nama", "Harga", "Jumlah", "Subtotal", "Kategori", ""].map((h, i) => (
                <HeadCell key={i}>{h}</HeadCell>
              ))}
              {rows.map((r, i) => [
                <RowHead key={`h${i}`}>{i + 1}</RowHead>,
                ...r.map((c, j) => <Cell key={`${i}-${j}`}>{c}</Cell>),
                <DeleteCell key={`d${i}`}>Delete</DeleteCell>,
              ])}
            </Grid>
            <Scrollbar>
              <ScrollArrow>◀</ScrollArrow>
              <ScrollThumb />
              <ScrollArrow $end>▶</ScrollArrow>
            </Scrollbar>
          </TableFrame>
          <Totals>
            <span>Total:</span><span>17100</span><span>Sisa:</span><span>Isi Budget</span>
          </Totals>
          <Author>LALU MUHAMMAD NOVAL ADIPRATAMA | F1D022956<SizeGrip /></Author>
        </Body>
      </AppWindow>
    </Screen>
  );
}
